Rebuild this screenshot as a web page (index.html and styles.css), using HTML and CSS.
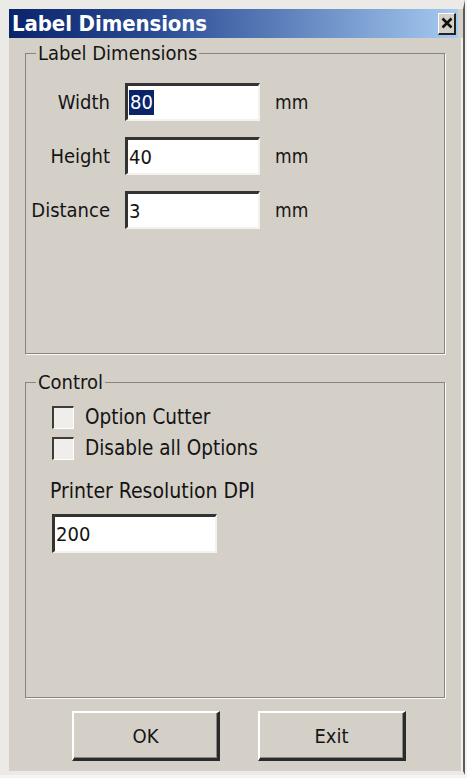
FILE: index.html
```html
<!DOCTYPE html>
<html>
<head>
<meta charset="utf-8">
<title>Label Dimensions</title>
<link rel="stylesheet" href="styles.css">
</head>
<body>
<div class="window">
  <div class="titlebar">
    <span class="title">Label Dimensions</span>
    <span class="close">
      <svg width="12" height="12" viewBox="0 0 12 12"><path d="M1.5 1.5 L10.5 10.5 M10.5 1.5 L1.5 10.5" stroke="#111" stroke-width="2.6" fill="none"/></svg>
    </span>
  </div>
  <div class="body">
    <fieldset class="group group-dims">
      <legend class="legend">Label Dimensions</legend>
      <div class="dims">
        <span class="lbl">Width</span><span class="field"><span class="sel">80</span></span><span class="unit">mm</span>
        <span class="lbl">Height</span><span class="field">40</span><span class="unit">mm</span>
        <span class="lbl">Distance</span><span class="field">3</span><span class="unit">mm</span>
      </div>
    </fieldset>
    <fieldset class="group group-control">
      <legend class="legend">Control</legend>
      <div class="check check-first"><span class="box"></span><span>Option Cutter</span></div>
      <div class="check"><span class="box"></span><span>Disable all Options</span></div>
      <div class="dpi-label">Printer Resolution DPI</div>
      <div class="field dpi">200</div>
    </fieldset>
    <div class="buttons">
      <div class="btn">OK</div>
      <div class="btn">Exit</div>
    </div>
  </div>
</div>
</body>
</html>
```
FILE: styles.css
```css
html, body {
  margin: 0;
  background: #f4f4f2;
}
body {
  font-family: "DejaVu Sans Condensed", "DejaVu Sans", sans-serif;
  font-size: 20px;
  color: #141414;
}
.window {
  width: 465px;
  height: 775px;
  box-sizing: border-box;
  background: #d4d0c8;
  border-left: 9px solid #ebeae6;
  border-top: 9px solid #ebeae6;
  border-right: 2px solid #5a5a5a;
  border-bottom: 4px solid #ebeae6;
  display: flex;
  flex-direction: column;
}
.titlebar {
  height: 29px;
  margin-right: 5px;
  background: linear-gradient(to right, #0a246a 0%, #2c4f98 35%, #a6caf0 100%);
  display: flex;
  align-items: center;
  padding: 0 2px 0 3px;
}
.title {
  color: #fff;
  font-weight: bold;
  font-size: 22px;
  letter-spacing: -0.1px;
}
.close {
  margin-left: auto;
  width: 18px;
  height: 22px;
  box-sizing: border-box;
  background: #d4d0c8;
  border-top: 1px solid #fff;
  border-left: 1px solid #fff;
  border-right: 2px solid #222;
  border-bottom: 2px solid #222;
  display: flex;
  align-items: center;
  justify-content: center;
}
.body {
  flex: 1;
  border-right: 2px solid #efeee9;
  padding: 4px 16px 0 16px;
  display: flex;
  flex-direction: column;
}
.group {
  margin: 0;
  padding: 0;
  border: 1px solid #888580;
  box-shadow: 1px 1px 0 #fbfaf8;
  box-sizing: border-box;
  min-width: 0;
}
.legend {
  margin-left: 10px;
  padding: 0 2px;
  line-height: 22px;
}
.group-dims {
  height: 312px;
}
.group-control {
  margin-top: 17px;
  height: 327px;
}
.dims {
  display: grid;
  grid-template-columns: 84px 135px auto;
  column-gap: 15px;
  row-gap: 16px;
  align-items: center;
  margin-top: 19px;
}
.lbl {
  text-align: right;
}
.field {
  height: 38px;
  box-sizing: border-box;
  background: #fff;
  border-top: 3px solid #333;
  border-left: 3px solid #333;
  border-right: 2px solid #f3f2ef;
  border-bottom: 2px solid #f3f2ef;
  padding-left: 1px;
  display: flex;
  align-items: center;
}
.sel {
  background: #0a246a;
  color: #fff;
  line-height: 25px;
  padding: 0 1px;
}
.unit {
  font-size: 19px;
}
.check {
  display: flex;
  align-items: center;
  height: 24px;
  padding-left: 26px;
  gap: 11px;
  margin-top: 7px;
  font-size: 20.5px;
}
.check-first {
  margin-top: 12px;
}
.box {
  width: 22px;
  height: 23px;
  box-sizing: border-box;
  background: #efeeea;
  border-top: 2px solid #3c3c3c;
  border-left: 2px solid #3c3c3c;
  border-right: 1px solid #fff;
  border-bottom: 1px solid #fff;
}
.dpi-label {
  margin-top: 19px;
  padding-left: 24px;
  line-height: 24px;
  font-size: 21px;
}
.dpi {
  margin-top: 11px;
  margin-left: 26px;
  width: 165px;
  height: 39px;
}
.buttons {
  display: flex;
  gap: 38px;
  margin-top: 13px;
  padding-left: 47px;
}
.btn {
  width: 148px;
  height: 50px;
  box-sizing: border-box;
  border-top: 2px solid #fff;
  border-left: 2px solid #fff;
  border-right: 3px solid #2a2a2a;
  border-bottom: 3px solid #2a2a2a;
  box-shadow: inset -1px -1px 0 #888;
  display: flex;
  align-items: center;
  justify-content: center;
}
```
